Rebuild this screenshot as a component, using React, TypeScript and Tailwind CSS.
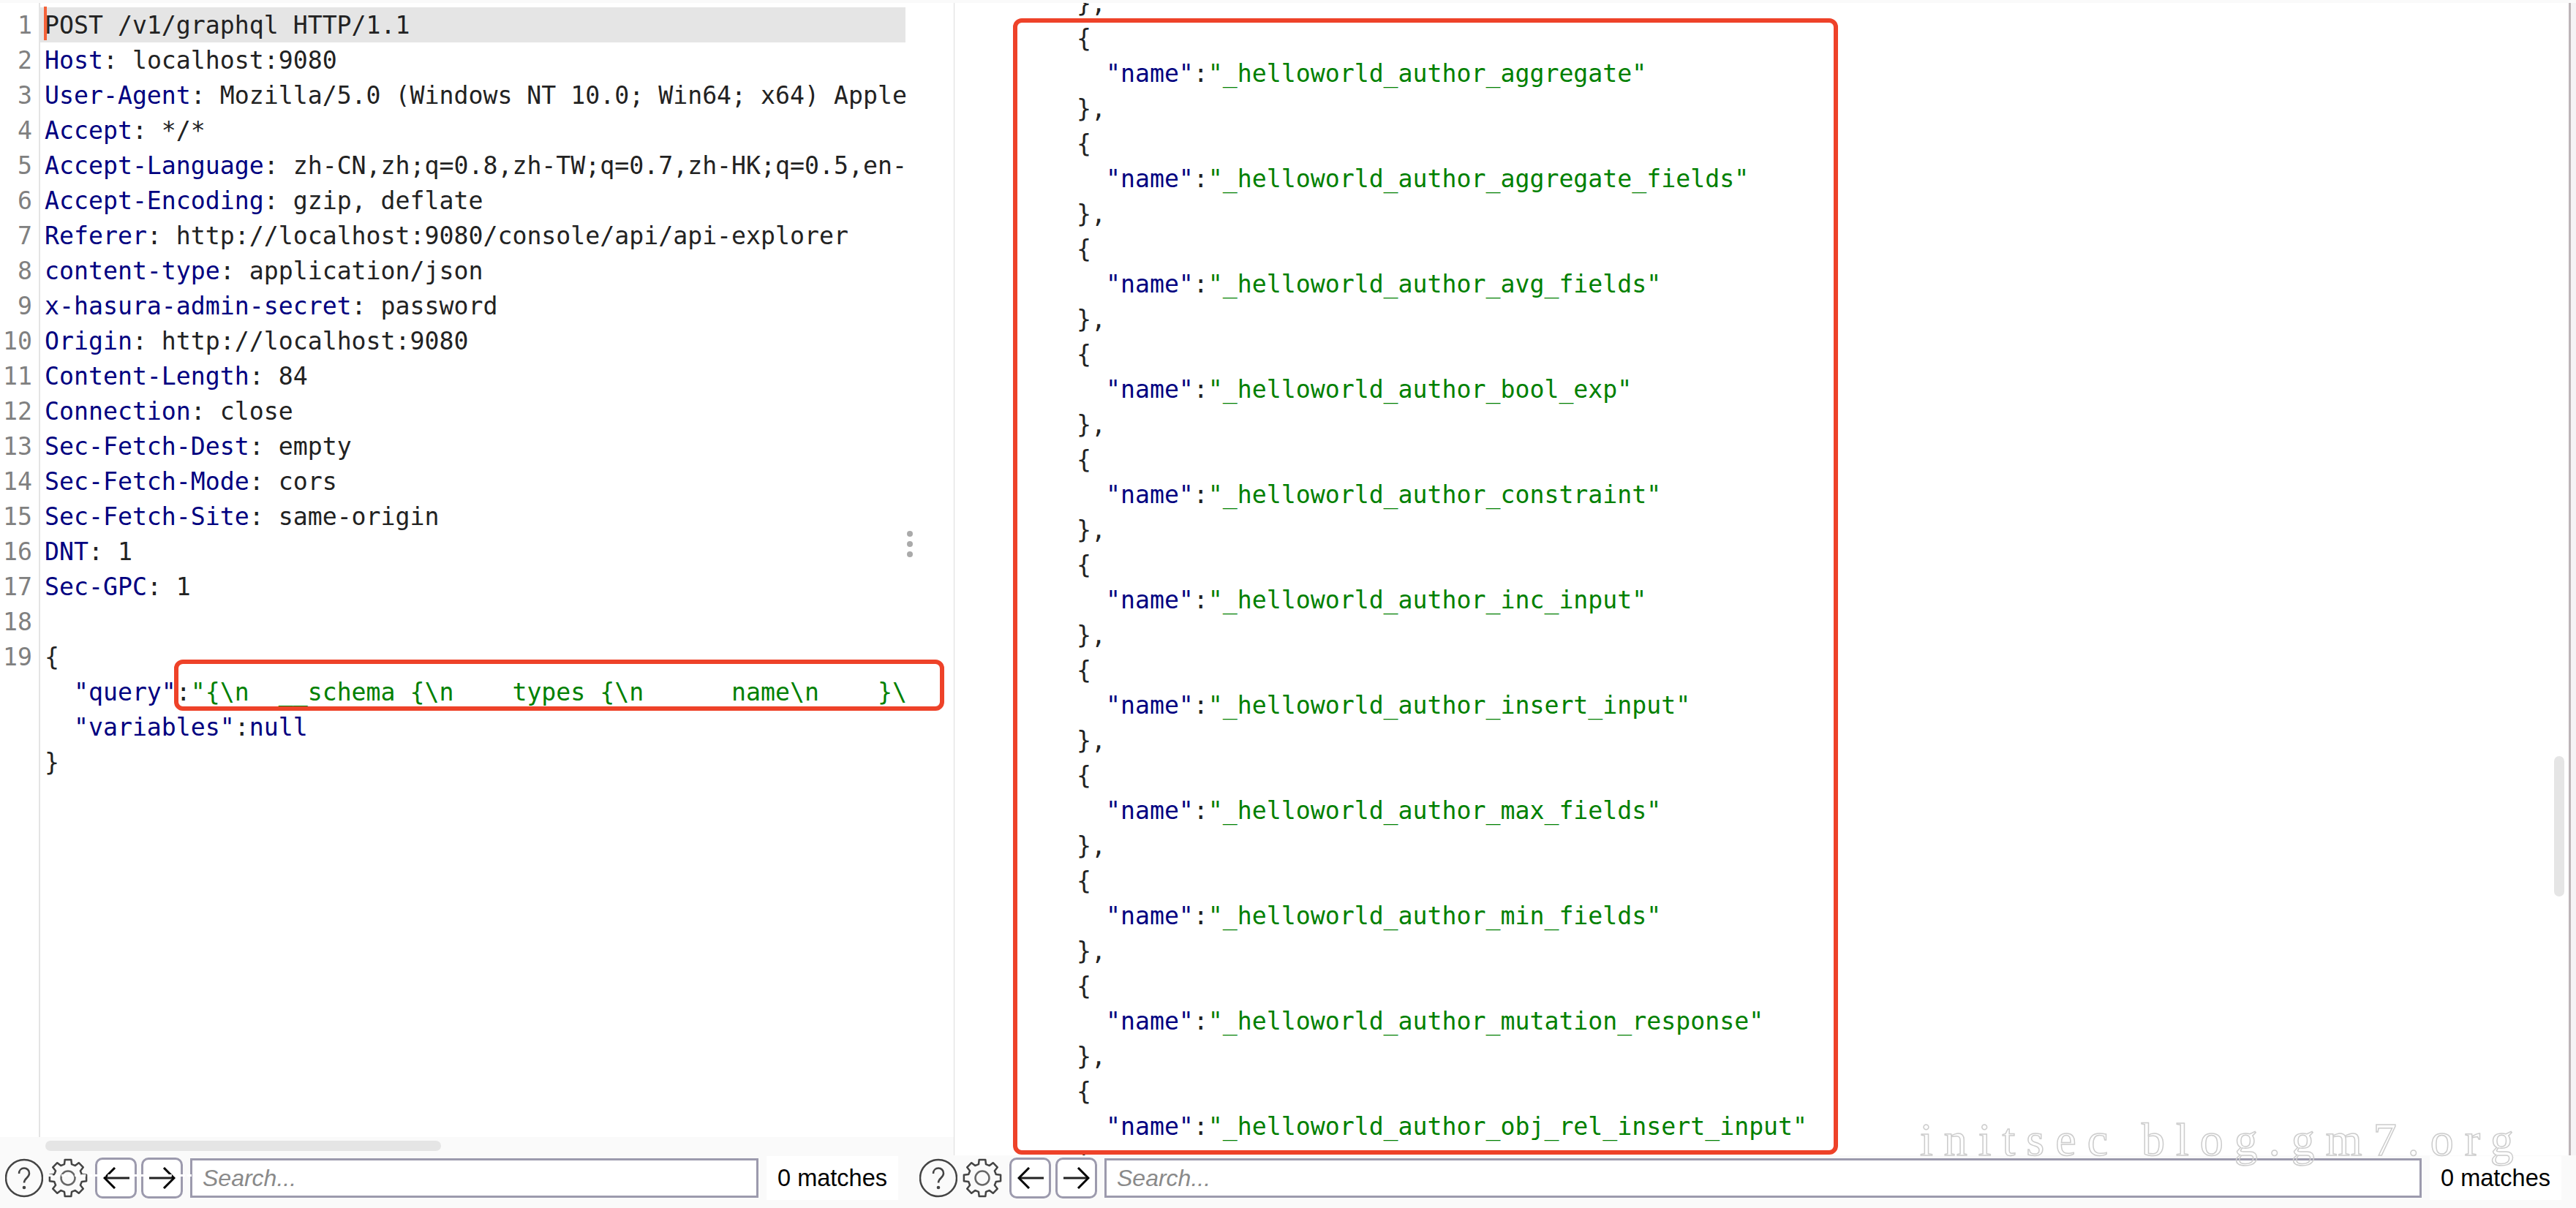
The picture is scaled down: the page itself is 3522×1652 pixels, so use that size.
import type { ReactNode } from "react";

const headers: [string, string][] = [
  ["Host", "localhost:9080"],
  ["User-Agent", "Mozilla/5.0 (Windows NT 10.0; Win64; x64) Apple"],
  ["Accept", "*/*"],
  ["Accept-Language", "zh-CN,zh;q=0.8,zh-TW;q=0.7,zh-HK;q=0.5,en-"],
  ["Accept-Encoding", "gzip, deflate"],
  ["Referer", "http://localhost:9080/console/api/api-explorer"],
  ["content-type", "application/json"],
  ["x-hasura-admin-secret", "password"],
  ["Origin", "http://localhost:9080"],
  ["Content-Length", "84"],
  ["Connection", "close"],
  ["Sec-Fetch-Dest", "empty"],
  ["Sec-Fetch-Mode", "cors"],
  ["Sec-Fetch-Site", "same-origin"],
  ["DNT", "1"],
  ["Sec-GPC", "1"],
];

const typeNames = [
  "_helloworld_author_aggregate",
  "_helloworld_author_aggregate_fields",
  "_helloworld_author_avg_fields",
  "_helloworld_author_bool_exp",
  "_helloworld_author_constraint",
  "_helloworld_author_inc_input",
  "_helloworld_author_insert_input",
  "_helloworld_author_max_fields",
  "_helloworld_author_min_fields",
  "_helloworld_author_mutation_response",
  "_helloworld_author_obj_rel_insert_input",
];

const lineNumbers = Array.from({ length: 19 }, (_, i) => i + 1);

// 8 teeth cog outline, centred on 27,27
const gearPath = (() => {
  const pts: string[] = [];
  for (let i = 0; i < 8; i++) {
    const a = (i * Math.PI) / 4 - Math.PI / 2;
    const corners: [number, number][] = [
      [19.5, -0.26],
      [25.5, -0.17],
      [25.5, 0.17],
      [19.5, 0.26],
    ];
    for (const [r, d] of corners) {
      const x = 27 + r * Math.cos(a + d);
      const y = 27 + r * Math.sin(a + d);
      pts.push(`${x.toFixed(1)} ${y.toFixed(1)}`);
    }
  }
  return `M${pts.join("L")}Z`;
})();

function Line({ children }: { children?: ReactNode }) {
  return <div className="h-[48px] leading-[48px] whitespace-pre">{children}</div>;
}

function HelpIcon() {
  return (
    <svg width="52" height="54" viewBox="0 0 52 54" className="shrink-0">
      <circle cx="26" cy="27" r="25" fill="none" stroke="#444" strokeWidth="2.5" />
      <path
        d="M19 21c0-4.500 3-7.500 7-7.500s7 3 7 7c0 6.500-7 6.500-7 13"
        fill="none"
        stroke="#444"
        strokeWidth="2.5"
      />
      <circle cx="26" cy="40" r="2.300" fill="#444" />
    </svg>
  );
}

function GearIcon() {
  return (
    <svg width="54" height="54" viewBox="0 0 54 54" className="shrink-0">
      <path d={gearPath} fill="none" stroke="#444" strokeWidth="2.500" strokeLinejoin="round" />
      <circle cx="27" cy="27" r="9.500" fill="none" stroke="#666" strokeWidth="2.500" />
    </svg>
  );
}

function NavButton({ children }: { children: ReactNode }) {
  return (
    <div className="flex h-[56px] w-[57px] shrink-0 items-center justify-center rounded-[10px] border-[3px] border-[#9c9aad] bg-white">
      {children}
    </div>
  );
}

function BackIcon() {
  return (
    <svg width="36" height="30" viewBox="0 0 36 30">
      <path d="M2 15h34" stroke="#222" strokeWidth="3" />
      <path d="M16 1 2 15l14 14" fill="none" stroke="#000" strokeWidth="3" />
    </svg>
  );
}

function ForwardIcon() {
  return (
    <svg width="36" height="30" viewBox="0 0 36 30">
      <path d="M0 15h34" stroke="#222" strokeWidth="3" />
      <path d="M20 1l14 14-14 14" fill="none" stroke="#000" strokeWidth="3" />
    </svg>
  );
}

function SearchBar({ inputWidth }: { inputWidth: string }) {
  return (
    <div className="flex h-[60px] items-center">
      <HelpIcon />
      <div className="ml-[7px]">
        <GearIcon />
      </div>
      <div className="ml-[10px] flex gap-[6px]">
        <NavButton>
          <BackIcon />
        </NavButton>
        <NavButton>
          <ForwardIcon />
        </NavButton>
      </div>
      <div
        className={`ml-[10px] flex h-[54px] items-center border-[3px] border-[#9c9aad] bg-white pl-[14px] font-['Liberation_Sans',sans-serif] text-[32px] text-[#8a8a8a] italic ${inputWidth}`}
      >
        Search...
      </div>
      <div className="ml-[11px] flex h-[60px] w-[180px] items-center justify-center bg-white font-['Liberation_Sans',sans-serif] text-[32.5px] text-black">
        0 matches
      </div>
    </div>
  );
}

export default function App() {
  return (
    <div className="relative flex h-[1652px] w-[3522px] flex-col overflow-hidden bg-white font-['DejaVu_Sans_Mono',monospace] text-[33.2px] text-[#222]">
      <div className="h-[4px] shrink-0 bg-[#fafafa]" />
      <div className="flex h-[1576px] shrink-0">
        {/* request */}
        <section className="relative flex w-[1305px] shrink-0 flex-col border-r border-[#dcdcdc]">
          <div className="flex min-h-0 flex-1">
            <div className="w-[55px] shrink-0 border-r-2 border-[#e4e4e4] pt-[6px] pr-[9px] text-right text-[#808080]">
              {lineNumbers.map((n) => (
                <div key={n} className="h-[48px] pt-[1px] leading-[48px]">
                  {n}
                </div>
              ))}
            </div>
            <div className="w-[1183px] shrink-0 pt-[6px] pl-[6px]">
              <div className="relative -ml-[6px] bg-[#e5e5e5] pl-[6px]">
                <div className="h-[48px] pt-[1px] leading-[48px] whitespace-pre">POST /v1/graphql HTTP/1.1</div>
                <div className="absolute top-[-1px] left-[5px] h-[46px] w-[4px] bg-[#f4623a]" />
              </div>
              <div className="pt-[1px]">
                {headers.map(([key, value]) => (
                  <Line key={key}>
                    <span className="text-[#000080]">{key}</span>: {value}
                  </Line>
                ))}
                <Line />
                <Line>{"{"}</Line>
                <Line>
                  {"  "}
                  <span className="text-[#000080]">"query"</span>:
                  <span className="text-[#008000]">{'"{\\n  __schema {\\n    types {\\n      name\\n    }\\'}</span>
                </Line>
                <Line>
                  {"  "}
                  <span className="text-[#000080]">"variables"</span>:<span className="text-[#000080]">null</span>
                </Line>
                <Line>{"}"}</Line>
              </div>
            </div>
          </div>
          <div className="flex h-[25px] shrink-0 items-start bg-[#fafafa] pt-[5px] pl-[62px]">
            <div className="h-[14px] w-[541px] rounded-[7px] bg-[#e5e5e5]" />
          </div>
          {/* splitter dots */}
          <div className="absolute top-[722px] left-[1240px] flex flex-col gap-[6px]">
            <span className="h-[8px] w-[8px] rounded-full bg-[#aaa]" />
            <span className="h-[8px] w-[8px] rounded-full bg-[#aaa]" />
            <span className="h-[8px] w-[8px] rounded-full bg-[#aaa]" />
          </div>
        </section>

        {/* response */}
        <section className="relative flex-1 overflow-hidden">
          <div className="-mt-[23px] pl-[167px]">
            <Line>{"},"}</Line>
            {typeNames.map((name) => (
              <div key={name}>
                <Line>{"{"}</Line>
                <Line>
                  {"  "}
                  <span className="text-[#000080]">"name"</span>:<span className="text-[#008000]">"{name}"</span>
                </Line>
                <Line>{"},"}</Line>
              </div>
            ))}
          </div>
          <div className="absolute top-[1030px] right-[16px] h-[192px] w-[14px] rounded-[7px] bg-[#e5e5e5]" />
          <div className="absolute top-0 right-0 bottom-0 h-full w-[10px] border-l-[3px] border-[#bdb5b8] bg-[#f5f3f5]" />
        </section>
      </div>

      {/* search bars */}
      <div className="flex min-h-0 flex-1 items-start bg-[#fafafa] pt-[1px] pl-[7px]">
        <SearchBar inputWidth="w-[777px]" />
        <div className="ml-[29px]">
          <SearchBar inputWidth="w-[1801px]" />
        </div>
      </div>

      {/* annotations on top of the screenshot */}
      <div className="absolute top-[902px] left-[238px] h-[70px] w-[1053px] rounded-[12px] border-[6px] border-[#ee4229]" />
      <div className="absolute top-[25px] left-[1385px] h-[1554px] w-[1128px] rounded-[12px] border-[6px] border-[#ee4229]" />
      <div className="absolute top-[1511px] left-[2625px] font-['Liberation_Serif',serif] text-[64px] tracking-[15px] whitespace-pre text-transparent [-webkit-text-stroke:1.5px_#cccccc]">
        initsec blog.gm7.org
      </div>
      {/* white scratch left over the left toolbar */}
      <div className="absolute top-[1606px] left-[66px] w-[196px] border-t-[3px] border-dashed border-white" />
    </div>
  );
}
